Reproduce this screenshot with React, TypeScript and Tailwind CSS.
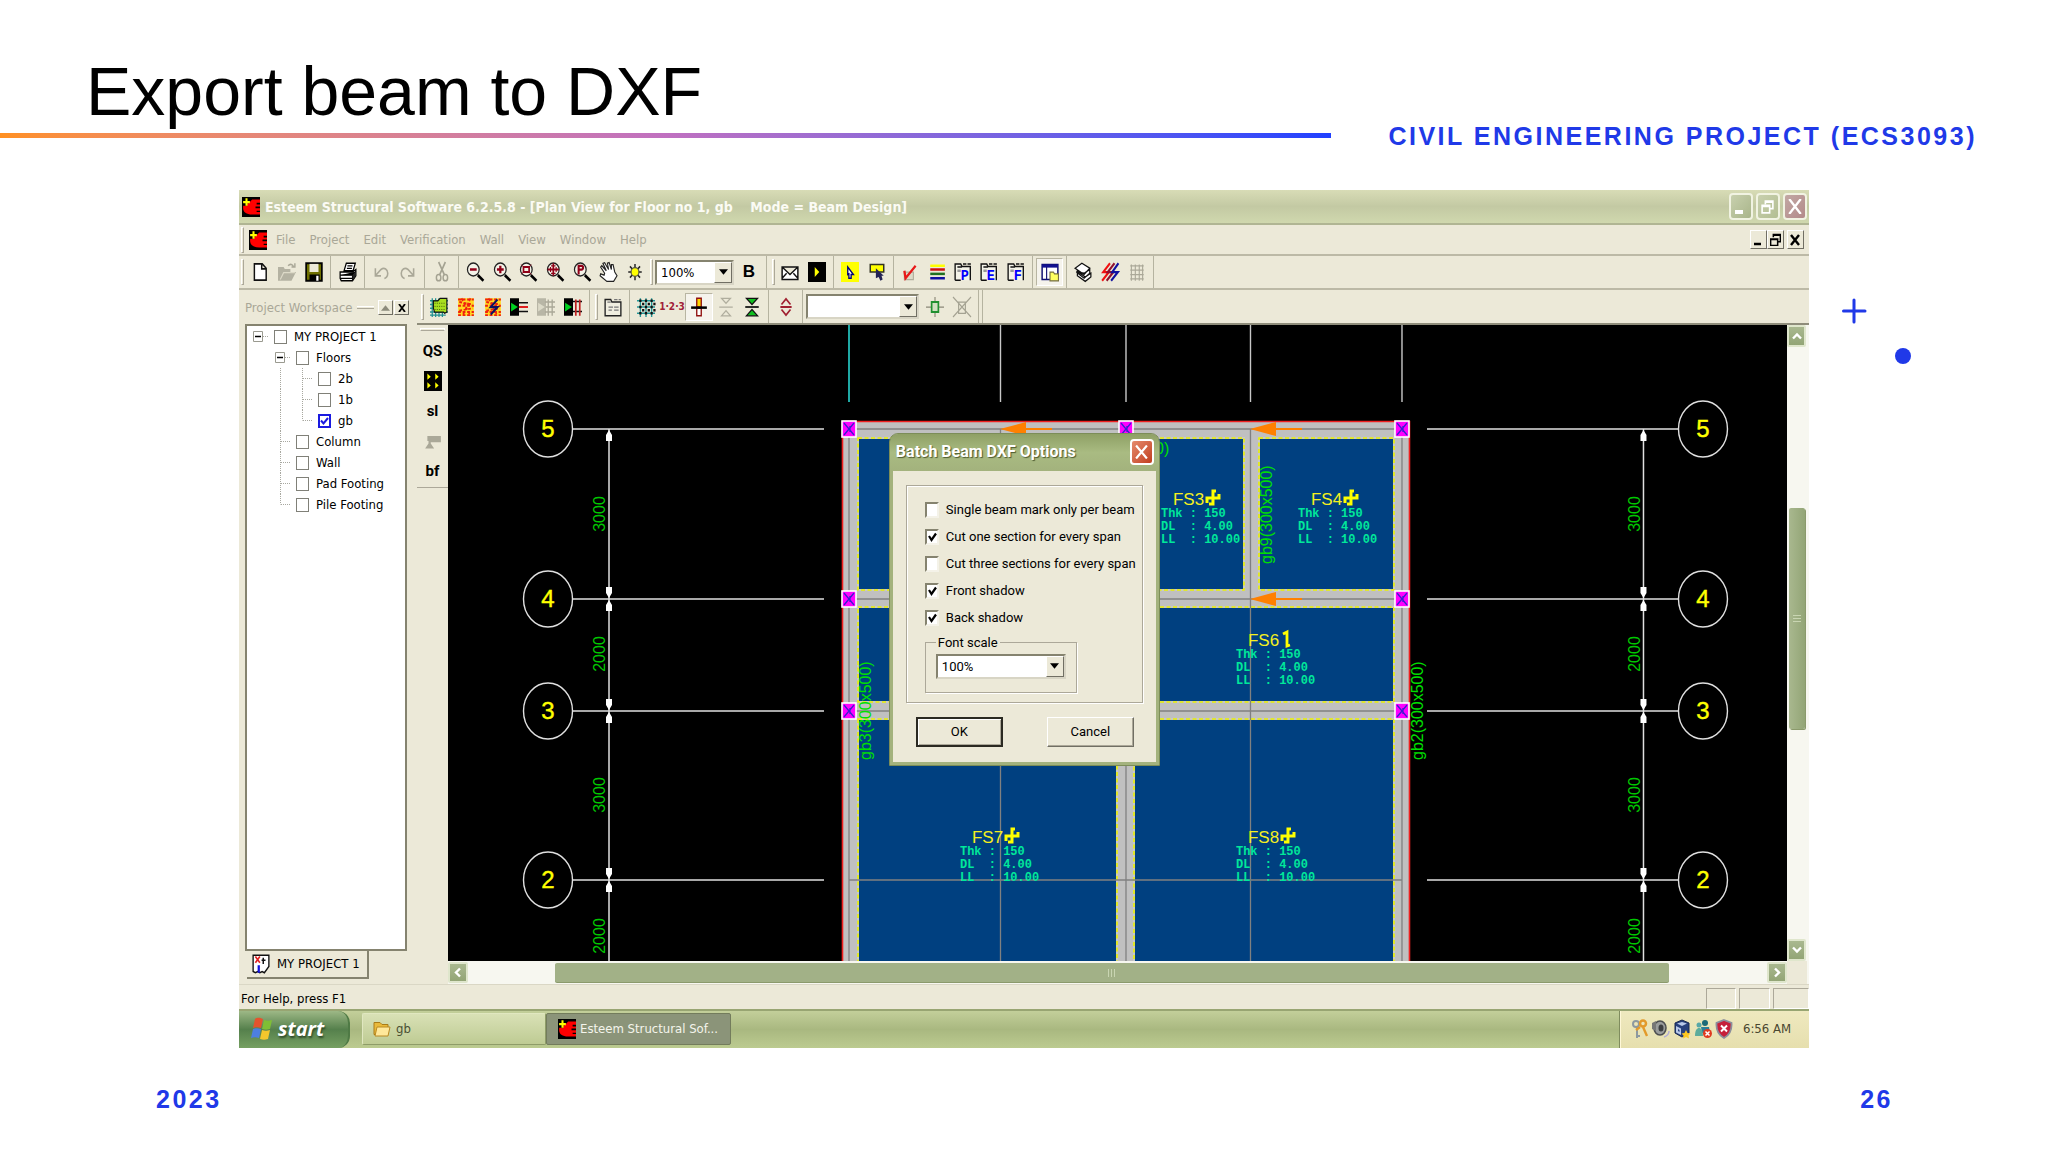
import type { ReactNode } from "react";

type Cell = "blank" | "box" | "line" | "tee" | "corner";

interface TreeRow {
  label: string;
  cells: Cell[];
  checked?: boolean;
}

interface Slab {
  name: string;
  x: number;
  y: number;
  infoX: number;
  infoY: number;
  oneWay?: boolean;
}

const menus = ["File", "Project", "Edit", "Verification", "Wall", "View", "Window", "Help"];

const treeRows: TreeRow[] = [
  { label: "MY PROJECT 1", cells: ["box"] },
  { label: "Floors", cells: ["blank", "box"] },
  { label: "2b", cells: ["blank", "line", "tee"] },
  { label: "1b", cells: ["blank", "line", "tee"] },
  { label: "gb", cells: ["blank", "line", "corner"], checked: true },
  { label: "Column", cells: ["blank", "tee"] },
  { label: "Wall", cells: ["blank", "tee"] },
  { label: "Pad Footing", cells: ["blank", "tee"] },
  { label: "Pile Footing", cells: ["blank", "corner"] },
];

const dialogOptions = [
  { label: "Single beam mark only per beam", checked: false },
  { label: "Cut one section for every span", checked: true },
  { label: "Cut three sections for every span", checked: false },
  { label: "Front shadow", checked: true },
  { label: "Back shadow", checked: true },
];

const gridRows = [
  { label: "5", y: 429 },
  { label: "4", y: 599 },
  { label: "3", y: 711 },
  { label: "2", y: 880 },
];

const spans = [
  { text: "3000", y: 514 },
  { text: "2000", y: 654 },
  { text: "3000", y: 795 },
  { text: "2000", y: 936 },
];

const slabs: Slab[] = [
  { name: "FS3", x: 1173, y: 505, infoX: 1161, infoY: 517 },
  { name: "FS4", x: 1311, y: 505, infoX: 1298, infoY: 517 },
  { name: "FS6", x: 1248, y: 646, infoX: 1236, infoY: 658, oneWay: true },
  { name: "FS7", x: 972, y: 843, infoX: 960, infoY: 855 },
  { name: "FS8", x: 1248, y: 843, infoX: 1236, infoY: 855 },
];

const panels = [
  { x: 858, y: 438, w: 259, h: 152 },
  { x: 1134, y: 438, w: 110, h: 152 },
  { x: 1259, y: 438, w: 135, h: 152 },
  { x: 858, y: 607, w: 259, h: 95 },
  { x: 1134, y: 607, w: 260, h: 95 },
  { x: 858, y: 719, w: 259, h: 250 },
  { x: 1134, y: 719, w: 260, h: 250 },
];

const columns = [
  [849, 429],
  [1126, 429],
  [1402, 429],
  [849, 599],
  [1402, 599],
  [849, 711],
  [1402, 711],
];

function Px({ children }: { children: ReactNode }) {
  return (
    <svg
      viewBox="0 0 16 16"
      preserveAspectRatio="none"
      className="h-[20px] w-[18px] shrink-0 overflow-visible"
      aria-hidden="true"
    >
      {children}
    </svg>
  );
}

function AppLogo() {
  return (
    <Px>
      <path fill="#000" d="M0 0h16v16H0z" />
      <path fill="#f00" d="M9 2h7v2.500h-3V6h3v1.500h-4V9h4v2h-3v1h3v2H9c-5 0-8-2-8-5V7h3.500V5H6z" />
      <path stroke="#ff0" strokeWidth="1.800" d="M4 1v6M1 4h6" />
    </Px>
  );
}

function Magnifier({ children }: { children: ReactNode }) {
  return (
    <Px>
      <circle cx="6.5" cy="6" r="5.2" fill="#f4f3e8" stroke="#222" strokeWidth="1.1" />
      <path stroke="#000" strokeWidth="2.2" d="M10.5 10.5 15.5 15" />
      <g stroke="#900018" fill="none" strokeWidth="1.5">
        {children}
      </g>
    </Px>
  );
}

function Sheet({ letter }: { letter: string }) {
  return (
    <Px>
      <path fill="#f4f3e8" stroke="#111" strokeWidth="1.2" d="M1 14.5V1.5h5l1 2h7.5v11" />
      <path stroke="#111" strokeWidth="1.2" d="M3 4h4M8 1.5h3M12 1.5h3M1 14.5h5" />
      <path stroke="#999" strokeWidth="2" d="M3 7h3" />
      <text x="6" y="14.500" fontSize="12" className="fill-[#0000ff] font-['Liberation_Mono',monospace] font-bold">
        {letter}
      </text>
    </Px>
  );
}

function Tool({ label, pressed, children }: { label: string; pressed?: boolean; children: ReactNode }) {
  return (
    <button
      type="button"
      aria-label={label}
      className={
        pressed
          ? "flex h-[28px] min-w-0 flex-1 items-center justify-center border border-[#b8b5a2] border-r-white border-b-white bg-[#f5f3ec]"
          : "flex h-[28px] min-w-0 flex-1 items-center justify-center"
      }
    >
      {children}
    </button>
  );
}

function Sep() {
  return <span className="mx-[3px] h-full w-px shrink-0 bg-[#b5b3a0]" />;
}

function Grip() {
  return <span className="mx-[2px] h-[26px] w-[3px] shrink-0 border border-white border-r-[#aca899] border-b-[#aca899]" />;
}

function Combo({ label, value, className }: { label: string; value: string; className: string }) {
  return (
    <span className={`relative block h-[25px] shrink-0 ${className}`}>
      <select
        aria-label={label}
        defaultValue={value}
        className="h-full w-full appearance-none border-2 border-[#85836f] border-r-[#d8d5c5] border-b-[#d8d5c5] bg-white px-1 leading-none text-black"
      >
        <option value={value}>{value}</option>
      </select>
      <span className="pointer-events-none absolute top-[2px] right-[2px] bottom-[2px] flex w-[18px] items-center justify-center border border-white border-r-[#716f64] border-b-[#716f64] bg-[#ece9d8]">
        <svg viewBox="0 0 8 5" className="h-[6px] w-[9px]" aria-hidden="true">
          <path d="M0 0h8L4 5z" />
        </svg>
      </span>
    </span>
  );
}

function TreeCell({ kind }: { kind: Cell }) {
  return (
    <svg viewBox="0 0 22 21" className="h-[21px] w-[22px] shrink-0" aria-hidden="true">
      <g stroke="#a8a8a0" strokeDasharray="1 1" fill="none">
        {kind === "box" && <path d="M16 10.5h6" />}
        {(kind === "line" || kind === "tee") && <path d="M11.5 0v21" />}
        {kind === "corner" && <path d="M11.5 0v10.5" />}
        {(kind === "tee" || kind === "corner") && <path d="M12 10.5h10" />}
      </g>
      {kind === "box" && (
        <>
          <path fill="#fff" stroke="#9a9a90" d="M6.5 5.5h9v10h-9z" />
          <path stroke="#000" strokeWidth="1.5" d="M8 10.5h6" />
        </>
      )}
    </svg>
  );
}

function TreeItem({ row }: { row: TreeRow }) {
  return (
    <li className="flex h-[21px] items-center">
      {row.cells.map((cell, i) => (
        <TreeCell key={i} kind={cell} />
      ))}
      <label className="ml-[5px] flex items-center gap-[7px] whitespace-nowrap">
        <span className="relative block h-[14px] w-[13px]">
          <input
            type="checkbox"
            defaultChecked={row.checked}
            className="peer block h-[14px] w-[13px] appearance-none border border-[#808078] bg-white checked:border-2 checked:border-[#1a1ae0]"
          />
          <svg
            viewBox="0 0 13 14"
            className="pointer-events-none absolute inset-0 hidden h-[14px] w-[13px] peer-checked:block"
            aria-hidden="true"
          >
            <path d="M3 6.5l2.5 3L10 4" fill="none" stroke="#1a1ae0" strokeWidth="2" />
          </svg>
        </span>
        {row.label}
      </label>
    </li>
  );
}

function ScrollButton({ label, d, className }: { label: string; d: string; className: string }) {
  return (
    <button
      type="button"
      aria-label={label}
      className={`flex shrink-0 items-center justify-center rounded-xs border-2 border-[#dfe6cc] bg-linear-to-b from-[#a9b88f] to-[#93a576] ${className}`}
    >
      <svg viewBox="0 0 10 10" className="h-[11px] w-[10px]" aria-hidden="true">
        <path d={d} fill="none" stroke="#fff" strokeWidth="2.4" />
      </svg>
    </button>
  );
}

function PlanView() {
  return (
    <svg viewBox="448 325 1339 636" className="block w-full bg-black" role="img" aria-label="Plan view for floor gb">
      <path stroke="#1fa8a4" strokeWidth="2" d="M849 325v77" />
      <path stroke="#c8c8c8" strokeWidth="1.4" d="M1000.5 325v77M1126 325v77M1250.5 325v77M1402 325v77" />

      {/* beams and slabs */}
      <path fill="#c0c0c0" d="M843 422h566v540H843z" />
      {panels.map((p) => (
        <g key={`${p.x}-${p.y}`}>
          <rect x={p.x} y={p.y} width={p.w} height={p.h} fill="#004080" />
          <rect x={p.x} y={p.y} width={p.w} height={p.h} fill="none" stroke="#c8c8c8" strokeWidth="2" />
          <rect x={p.x} y={p.y} width={p.w} height={p.h} fill="none" stroke="#e8f000" strokeWidth="1.6" strokeDasharray="4 2.5" />
        </g>
      ))}
      <path
        fill="none"
        stroke="#808080"
        strokeWidth="1.3"
        d="M849 429v540M1126 429v540M1402 429v540M1250.5 429v540M1000.5 429v540M849 429h553M849 599h553M849 711h553M849 880h553"
      />
      <path fill="none" stroke="#f02020" strokeWidth="1.6" d="M842.5 962V421.5h567V962" />

      {columns.map(([x, y]) => (
        <g key={`${x}-${y}`}>
          <rect x={x - 7} y={y - 8} width="14" height="16" fill="#f0f" stroke="#fff" strokeWidth="1.6" />
          <path d={`M${x - 5} ${y - 6}l10 12M${x + 5} ${y - 6}l-10 12M${x + 1} ${y - 3}v6`} stroke="#3a1fd0" strokeWidth="1.3" />
        </g>
      ))}

      {[
        [1000, 429],
        [1250, 429],
        [1250, 599],
      ].map(([x, y]) => (
        <path key={`${x}-${y}`} fill="#ff8000" d={`M${x} ${y}l26 -7v6h26v2h-26v6z`} />
      ))}

      {/* grid bubbles and dimension strings */}
      <path stroke="#e0e0e0" strokeWidth="1.5" d="M609 429V961M1643.5 429V961" />
      {gridRows.map((row, i) => (
        <g key={row.label}>
          <path stroke="#e0e0e0" strokeWidth="1.6" d={`M572 ${row.y}h252M1427 ${row.y}h252`} />
          {[548, 1703].map((x) => (
            <g key={x}>
              <ellipse cx={x} cy={row.y} rx="24.5" ry="28" fill="#000" stroke="#e0e0e0" strokeWidth="1.4" />
              <text
                x={x}
                y={row.y + 8}
                textAnchor="middle"
                fontSize="24"
                stroke="#ffff00"
                strokeWidth="0.4"
                className="fill-[#ffff00] font-['Liberation_Sans',sans-serif]"
              >
                {row.label}
              </text>
            </g>
          ))}
          {[609, 1643.5].map((x) => (
            <g key={x} fill="#fff">
              <path d={`M${x} ${row.y + 1}l3 5v6h-6v-6z`} />
              {i > 0 && <path d={`M${x} ${row.y - 1}l3 -5v-6h-6v6z`} />}
            </g>
          ))}
        </g>
      ))}
      <g fontSize="16" className="fill-[#00c800] font-['Liberation_Sans',sans-serif]">
        {spans.map((s) =>
          [605, 1640].map((x) => (
            <text key={`${x}-${s.y}`} textAnchor="middle" transform={`translate(${x} ${s.y}) rotate(-90)`}>
              {s.text}
            </text>
          ))
        )}
        <g className="fill-[#00e000]">
          <text transform="translate(1272 564) rotate(-90)">gb9(300x500)</text>
          <text transform="translate(871 760) rotate(-90)">gb3(300x500)</text>
          <text transform="translate(1423 760) rotate(-90)">gb2(300x500)</text>
          <text x="1155" y="454">
            0)
          </text>
        </g>
      </g>

      {slabs.map((s) => (
        <g key={s.name}>
          <text x={s.x} y={s.y} fontSize="17" className="fill-[#f4f020] font-['Liberation_Sans',sans-serif]">
            {s.name}
          </text>
          {s.oneWay ? (
            <path d={`M${s.x + 35} ${s.y - 12}l4 -2v14l3 -1`} fill="none" stroke="#ff0" strokeWidth="2.8" />
          ) : (
            <path
              d={`M${s.x + 34} ${s.y - 2}v-5h12v-4M${s.x + 43} ${s.y - 14}h-3v13h-4`}
              fill="none"
              stroke="#ff0"
              strokeWidth="3"
            />
          )}
          <g fontSize="12" className="fill-[#00e89a] font-['Liberation_Mono',monospace] font-bold">
            {["Thk : 150", "DL  : 4.00", "LL  : 10.00"].map((line, i) => (
              <text key={line} x={s.infoX} y={s.infoY + i * 13} className="whitespace-pre">
                {line}
              </text>
            ))}
          </g>
        </g>
      ))}
    </svg>
  );
}

function DxfDialog() {
  return (
    <div
      role="dialog"
      aria-label="Batch Beam DXF Options"
      className="absolute top-[16.5%] left-[33%] flex w-[269px] flex-col rounded-t-lg border-[3px] border-t-0 border-[#a3b27d] bg-[#ece9d8] font-['Roboto','Liberation_Sans',sans-serif] text-[13px] leading-[20px] text-black outline outline-[#7c8d58]"
    >
      <div className="-mx-[3px] flex h-[37px] items-center justify-between rounded-t-lg bg-linear-to-b from-[#8fa065] via-[#a9bb82] to-[#a3b27d] pr-[5px] pl-[6px]">
        <span className="text-[16px] font-bold text-white [text-shadow:1px_1px_1px_#4d5a30]">Batch Beam DXF Options</span>
        <button
          type="button"
          aria-label="Close"
          className="flex h-[26px] w-[24px] items-center justify-center rounded border-2 border-white bg-linear-to-br from-[#e58a6c] to-[#c03c1c]"
        >
          <svg viewBox="0 0 12 12" className="h-[14px] w-[13px]" aria-hidden="true">
            <path d="M1 0l10 12M11 0L1 12" stroke="#fff" strokeWidth="2" />
          </svg>
        </button>
      </div>
      <div className="mx-[13px] mt-[14px] border border-[#aca899] px-[18px] pt-[11px] pb-[9px] shadow-[1px_1px_0_#fff,inset_1px_1px_0_#fff]">
        {dialogOptions.map((option) => (
          <label key={option.label} className="flex h-[27px] items-center gap-[7px] whitespace-nowrap">
            <span className="relative block h-[16px] w-[14px]">
              <input
                type="checkbox"
                defaultChecked={option.checked}
                className="peer block h-[16px] w-[14px] appearance-none border-2 border-[#85836f] border-r-[#f4f2e8] border-b-[#f4f2e8] bg-white"
              />
              <svg
                viewBox="0 0 14 16"
                className="pointer-events-none absolute inset-0 hidden h-[16px] w-[14px] peer-checked:block"
                aria-hidden="true"
              >
                <path d="M4 7l2.5 4L11 4.5" fill="none" stroke="#000" strokeWidth="2.2" />
              </svg>
            </span>
            {option.label}
          </label>
        ))}
        <fieldset className="mt-px w-[152px] border border-[#aca899] px-[10px] pt-px pb-[13px] shadow-[1px_1px_0_#fff]">
          <legend className="px-[2px] leading-[20px]">Font scale</legend>
          <Combo label="Font scale" value="100%" className="w-full" />
        </fieldset>
      </div>
      <div className="flex justify-between pt-[14px] pr-[22px] pb-[15px] pl-[23px]">
        <button
          type="button"
          className="h-[30px] w-[87px] border-2 border-[#2b2a22] bg-[#ece9d8] shadow-[inset_1px_1px_0_#fff,inset_-1px_-1px_0_#aca899]"
        >
          OK
        </button>
        <button
          type="button"
          className="h-[30px] w-[87px] border border-white border-r-[#716f64] border-b-[#716f64] bg-[#ece9d8] shadow-[inset_-1px_-1px_0_#aca899]"
        >
          Cancel
        </button>
      </div>
    </div>
  );
}

function TitleBar() {
  return (
    <div className="flex h-[35px] items-center border-b-2 border-[#b0b593] bg-linear-to-b from-[#d8dcb6] via-[#c3c9a3] to-[#d0d8ae] pr-[2px] pl-[3px]">
      <AppLogo />
      <h2 className="ml-[5px] text-[14px] font-bold whitespace-pre text-[#fbfbf4]">
        Esteem Structural Software 6.2.5.8 - [Plan View for Floor no 1, gb    Mode = Beam Design]
      </h2>
      <div className="ml-auto flex gap-[3px]">
        <button
          type="button"
          aria-label="Minimize"
          className="flex h-[27px] w-[24px] items-end rounded border-2 border-[#f1f3e2] bg-linear-to-br from-[#c8d0ae] to-[#a9b58a] pb-[4px] pl-[4px]"
        >
          <span className="h-[4px] w-[8px] bg-white" />
        </button>
        <button
          type="button"
          aria-label="Restore"
          className="flex h-[27px] w-[24px] items-center justify-center rounded border-2 border-[#f1f3e2] bg-linear-to-br from-[#c8d0ae] to-[#b3be92]"
        >
          <svg viewBox="0 0 12 13" className="h-[14px] w-[13px]" aria-hidden="true">
            <path d="M4 4V1h7v7H8M1 5h7v7H1zM1 6h7M4 2h7" fill="none" stroke="#fff" strokeWidth="1.5" />
          </svg>
        </button>
        <button
          type="button"
          aria-label="Close"
          className="flex h-[27px] w-[24px] items-center justify-center rounded border-2 border-[#f1f3e2] bg-linear-to-br from-[#c2a8a4] to-[#b38a8a]"
        >
          <svg viewBox="0 0 12 13" className="h-[15px] w-[14px]" aria-hidden="true">
            <path d="M1 0l10 13M11 0L1 13" stroke="#fff" strokeWidth="2" />
          </svg>
        </button>
      </div>
    </div>
  );
}

function MenuBar() {
  const child =
    "flex h-[19px] w-[17px] items-center justify-center border border-white border-r-[#716f64] border-b-[#716f64] bg-[#ece9d8]";
  return (
    <div className="flex h-[31px] items-center border-b-2 border-[#bcb9a6] pr-[5px]">
      <Grip />
      <span className="ml-[3px]">
        <AppLogo />
      </span>
      <nav className="ml-[2px] flex text-[#a9a797]">
        {menus.map((menu) => (
          <button key={menu} type="button" className="px-[7px]">
            {menu}
          </button>
        ))}
      </nav>
      <div className="ml-auto flex">
        <button type="button" aria-label="Minimize child window" className={child}>
          <svg viewBox="0 0 10 12" className="h-[12px] w-[10px]" aria-hidden="true">
            <path d="M1 10h7" stroke="#000" strokeWidth="2.5" />
          </svg>
        </button>
        <button type="button" aria-label="Restore child window" className={child}>
          <svg viewBox="0 0 10 12" className="h-[13px] w-[11px]" aria-hidden="true">
            <path d="M3 4V1.5h6.5V8H7M.5 5.5H7v6H.5zM.5 6H7M3 2h6" fill="none" stroke="#000" strokeWidth="1.4" />
          </svg>
        </button>
        <button type="button" aria-label="Close child window" className={`ml-[3px] ${child}`}>
          <svg viewBox="0 0 10 12" className="h-[12px] w-[10px]" aria-hidden="true">
            <path d="M1 1l8 10M9 1L1 11" stroke="#000" strokeWidth="2.4" />
          </svg>
        </button>
      </div>
    </div>
  );
}

function MainToolbar() {
  return (
    <div className="flex h-[34px] items-center border-b-2 border-[#bcb9a6]">
      <Grip />
      <div className="flex w-[81px]">
        <Tool label="New">
          <Px>
            <path fill="#fff" stroke="#111" strokeWidth="1.3" d="M3 1.5h7l3.5 3.5v9.5H3zM9.5 1.5v4h4" />
          </Px>
        </Tool>
        <Tool label="Open">
          <Px>
            <path fill="#b4b2a2" d="M0 4h5l1 1.5h5V8h5l-4 7H0z" />
            <path fill="none" stroke="#aaa898" strokeWidth="1.3" d="M9 3c2-2 4-1 5 1m1-3v3h-3" />
            <path fill="none" stroke="#dddac8" d="M2 14l3-5.5h10" />
          </Px>
        </Tool>
        <Tool label="Save">
          <Px>
            <path fill="#6f7000" stroke="#000" strokeWidth="1.5" d="M1 1h14v14H1z" />
            <path fill="#ece9d8" d="M4 1.5h8V8H4z" />
            <path fill="#000" d="M4 10h9v5H4z" />
            <path fill="#fff" d="M10 11h2v4h-2z" />
          </Px>
        </Tool>
      </div>
      <Sep />
      <div className="flex w-[27px]">
        <Tool label="Print">
          <Px>
            <path fill="#fff" stroke="#000" strokeWidth="1.1" d="M4.5 7L6.500 1h8L12.500 7zM1 8h11l3-2v5l-3 4H2l-1-2z" />
            <path stroke="#000" strokeWidth="1" d="M7.500 3h4.500M7 5h4.500M1 10.500h11l3-3M1 13h11M12 10.500V15" />
            <path fill="#222" d="M12 10.500l3-3V11l-3 4z" />
          </Px>
        </Tool>
      </div>
      <Sep />
      <div className="flex w-[53px]">
        <Tool label="Undo">
          <Px>
            <path fill="none" stroke="#aaa898" strokeWidth="1.4" d="M3 5v6h5M3 11l5-5c3-2 6 0 6 3s-2 4-3 4" />
          </Px>
        </Tool>
        <Tool label="Redo">
          <Px>
            <path fill="none" stroke="#aaa898" strokeWidth="1.4" d="M13 5v6H8M13 11L8 6C5 4 2 6 2 9s2 4 3 4" />
          </Px>
        </Tool>
      </div>
      <Sep />
      <div className="flex w-[27px]">
        <Tool label="Cut">
          <Px>
            <path fill="none" stroke="#a4a292" strokeWidth="1.4" d="M5 0l5 10M11 0L6 10" />
            <ellipse cx="5" cy="12.5" rx="2" ry="2.5" fill="none" stroke="#a4a292" strokeWidth="1.3" />
            <ellipse cx="11" cy="12.5" rx="2" ry="2.5" fill="none" stroke="#a4a292" strokeWidth="1.3" />
          </Px>
        </Tool>
      </div>
      <Sep />
      <div className="flex w-[186px]">
        <Tool label="Zoom out">
          <Magnifier>
            <path strokeWidth="2" d="M3.5 6h6" />
          </Magnifier>
        </Tool>
        <Tool label="Zoom in">
          <Magnifier>
            <path strokeWidth="2" d="M3.5 6h6M6.5 3v6" />
          </Magnifier>
        </Tool>
        <Tool label="Zoom window">
          <Magnifier>
            <path d="M4 4h5v4H4z" />
            <path strokeWidth=".6" d="M2 2l2 2M11 2L9 4M2 10l2-2M11 10L9 8" />
          </Magnifier>
        </Tool>
        <Tool label="Zoom extents">
          <Magnifier>
            <path d="M6.5 1v10M1.5 6h10" />
            <path strokeWidth="1" d="M4 4v4M9 4v4M4.5 3h4M4.5 9h4" />
          </Magnifier>
        </Tool>
        <Tool label="Zoom previous">
          <Magnifier>
            <path strokeWidth="1.8" d="M5 10V3h2.5c2 0 2 3 0 3H5" />
          </Magnifier>
        </Tool>
        <Tool label="Pan">
          <Px>
            <path
              fill="#fff"
              stroke="#222"
              strokeWidth="1"
              d="M5 9L1.500 4l1-1 4 4-3-6 1.500-.5L8.500 6 7.500 1 9 .5l2 5.500 0-4h1.500L14 8l2 3-3 4.500H7L1 11l.5-1.500 3 1z"
            />
          </Px>
        </Tool>
        <Tool label="Redraw">
          <Px>
            <path stroke="#222" strokeWidth="1.3" d="M8 1.5v13M2 8h12M3.5 3.5l9 9M12.5 3.5l-9 9" />
            <circle cx="8" cy="8" r="3.5" fill="#ff0" stroke="#554" />
          </Px>
        </Tool>
      </div>
      <Grip />
      <Combo label="Zoom" value="100%" className="w-[79px]" />
      <div className="ml-px flex w-[28px]">
        <Tool label="Bold">
          <b className="font-['Liberation_Sans',sans-serif] text-[17px]">B</b>
        </Tool>
      </div>
      <Sep />
      <Grip />
      <div className="flex w-[53px]">
        <Tool label="Mail">
          <Px>
            <path fill="#fff" stroke="#111" strokeWidth="1.3" d="M1 4h14v10H1zM1 4l7 6 7-6M1 13l4-4M15 13l-4-4" />
          </Px>
        </Tool>
        <Tool label="Run">
          <Px>
            <path fill="#000" d="M0 0h16v16H0z" />
            <path fill="#ff0" d="M6 4l4 4-4 4z" />
          </Px>
        </Tool>
      </div>
      <Sep />
      <div className="flex w-[53px]">
        <Tool label="Select">
          <Px>
            <path fill="#ff0" d="M0 0h16v16H0z" />
            <path fill="#fff" stroke="#007" strokeWidth="1.2" d="M6 4l5 6H9v3H7V9.5L6 10z" />
          </Px>
        </Tool>
        <Tool label="Select beam">
          <Px>
            <path fill="#ff0" stroke="#332" strokeWidth="1.3" d="M2 2h12v6H2z" />
            <path fill="#225" d="M7 5l7 6h-2l1 3-2 1-1.5-3L7 13z" />
          </Px>
        </Tool>
      </div>
      <Sep />
      <div className="flex w-[132px]">
        <Tool label="Check">
          <Px>
            <path fill="#dddac8" stroke="#b0ad9b" d="M3 8h8v6H3z" />
            <path fill="none" stroke="#e81818" strokeWidth="2" d="M3 7l1 6L13 3" />
          </Px>
        </Tool>
        <Tool label="Layers">
          <Px>
            <path stroke="#ff0" strokeWidth="2" d="M2 3h13" />
            <path stroke="#d01010" strokeWidth="2" d="M2 6h13" />
            <path stroke="#207020" strokeWidth="2" d="M2 9.5h13" />
            <path stroke="#1010a0" strokeWidth="2" d="M2 13h13" />
          </Px>
        </Tool>
        <Tool label="Plan">
          <Sheet letter="P" />
        </Tool>
        <Tool label="Elevation">
          <Sheet letter="E" />
        </Tool>
        <Tool label="Frame">
          <Sheet letter="F" />
        </Tool>
      </div>
      <Sep />
      <div className="flex w-[27px]">
        <Tool label="Workspace" pressed>
          <Px>
            <path fill="#fff" stroke="#101070" strokeWidth="1.3" d="M1 2h14v12H1z" />
            <path fill="#101090" d="M1 2h14v2.5H1z" />
            <path stroke="#101070" d="M5 4v10" />
            <path fill="#ffff60" stroke="#777040" d="M8 8h3l1 1.5h3.5v5.5H8z" />
          </Px>
        </Tool>
      </div>
      <Sep />
      <div className="flex w-[80px]">
        <Tool label="Stack">
          <Px>
            <path fill="#fff" stroke="#111" strokeWidth="1.1" d="M3 11l7 4.500 5-3.500V9l-5 3-7-4.500zM2 8l7 5 5-4V6l-5 3zM1 5l6-4 7 4-5 5z" />
          </Px>
        </Tool>
        <Tool label="Analyse">
          <Px>
            <path fill="none" stroke="#f01010" strokeWidth="1.8" d="M8 1L2 8h5l-6 7" />
            <path fill="none" stroke="#901030" strokeWidth="1.8" d="M12 1L6 8h5l-6 7" />
            <path fill="none" stroke="#1010a0" strokeWidth="1.8" d="M15.5 1L10 8h5l-6 7" />
          </Px>
        </Tool>
        <Tool label="Grid">
          <Px>
            <path fill="none" stroke="#aaa898" d="M3 2v13M6.5 2v13M10 2v13M13 2v13M2 3h12M2 6.5h12M2 10h12M2 13.5h12" />
          </Px>
        </Tool>
      </div>
      <Sep />
    </div>
  );
}

function DesignToolbar() {
  return (
    <div className="flex h-[35px] items-center border-b-2 border-[#8f8d7b] pl-[2px]">
      <Grip />
      <div className="flex w-[160px]">
        <Tool label="Slab mesh">
          <Px>
            <path stroke="#209090" strokeWidth="1.1" d="M2 1v15M5 1v15M8 1v15M11 1v15M0 3h16M0 6h16M0 9h16M0 12h16M0 14.5h14" />
            <path fill="#a8e020" stroke="#111" d="M3 3h4l2-2h6v11l-2 1-1-1H4l-1-3z" />
            <path stroke="#507010" strokeWidth=".8" strokeDasharray="1 1" d="M4 5h10M4 7.5h10M4 10h10" />
          </Px>
        </Tool>
        <Tool label="Contour">
          <Px>
            <path fill="#ffd820" d="M1 1h14v14H1z" />
            <path
              fill="none"
              stroke="#f02010"
              strokeWidth="1.5"
              strokeDasharray="2.5 1.5"
              d="M1 2h14M2 4l12 2M1 7h14M2 11l12-2M1 12h14M1 14.5h14M4 1l8 14M12 1L5 15"
            />
          </Px>
        </Tool>
        <Tool label="Stress">
          <Px>
            <path fill="#ffd820" d="M1 1h14v14H1z" />
            <path
              fill="none"
              stroke="#f02010"
              strokeWidth="1.5"
              strokeDasharray="2.5 1.5"
              d="M1 2h14M2 4l12 2M1 7h14M2 11l12-2M1 12h14M1 14.5h14M4 1l8 14"
            />
            <path fill="none" stroke="#101060" strokeWidth="1.8" d="M12 2L6 8h6l-6 6" />
          </Px>
        </Tool>
        <Tool label="Beam run">
          <Px>
            <path fill="#000" d="M0 1h8v14H0z" />
            <path fill="#00d020" d="M1 4.5L7 8l-6 3.5z" />
            <path stroke="#111" strokeWidth="1.2" d="M8 4.5h8M8 11.5h8" />
            <path stroke="#e02020" strokeWidth="1.6" d="M8 8h8" />
          </Px>
        </Tool>
        <Tool label="Column run">
          <Px>
            <path fill="#b8b6a6" d="M0 1h8v14H0z" />
            <path fill="#dcdac8" d="M1 4.5L7 8l-6 3.5z" />
            <path stroke="#aaa898" strokeWidth="1.2" d="M7 4h9M8 8h8M7 12h9M10 2v13M13.5 2v13" />
          </Px>
        </Tool>
        <Tool label="Frame run">
          <Px>
            <path fill="#000" d="M0 1h8v14H0z" />
            <path fill="#00d020" d="M1 4.5L7 8l-6 3.5z" />
            <path stroke="#111" strokeWidth="1.2" d="M8 3.5h8M8 11.5h8" />
            <path stroke="#c02020" strokeWidth="1.5" d="M10.5 2v13M14 2v13" />
          </Px>
        </Tool>
      </div>
      <Sep />
      <Grip />
      <div className="flex w-[26px]">
        <Tool label="Report">
          <Px>
            <path fill="#f0eee0" stroke="#222" strokeWidth="1.2" d="M1 15V2h5l1 2h8v11z" />
            <path stroke="#777" d="M3 4h3M9 2h3M13 2h2M4 8h4M9 8h4M9 10.5h4M4 10.5h3" />
          </Px>
        </Tool>
      </div>
      <Sep />
      <div className="flex w-[132px]">
        <Tool label="Grid points">
          <Px>
            <path fill="none" stroke="#209898" strokeWidth="1.2" d="M3 1v15M8 1v15M13 1v15M0 3h16M0 8h16M0 13h16" />
            <path stroke="#111" strokeWidth="2" strokeDasharray="2 3" d="M2 3h14M2 8h14M2 13h14M4.5 5.5h12M4.5 10.5h12" />
          </Px>
        </Tool>
        <Tool label="Numbering">
          <span className="text-[10px] leading-none font-bold text-[#a02038]">1·2·3</span>
        </Tool>
        <Tool label="Section" pressed>
          <Px>
            <path fill="#ffd800" stroke="#901010" strokeWidth="1.2" d="M6 1h4v7H6z" />
            <path fill="#fff" stroke="#901010" strokeWidth="1.2" d="M6 9h4v6H6z" />
            <path stroke="#000" strokeWidth="2" d="M1 8.5h14" />
          </Px>
        </Tool>
        <Tool label="Collapse">
          <Px>
            <path fill="none" stroke="#b0ae9e" d="M4 1h8L8 5zM2 8h12M4 15h8l-4-4z" />
          </Px>
        </Tool>
        <Tool label="Expand">
          <Px>
            <path fill="#10c020" stroke="#111" d="M3 1h10L8 6zM3 15h10l-5-5z" />
            <path stroke="#111" strokeWidth="1.4" d="M2 8h12" />
          </Px>
        </Tool>
      </div>
      <Sep />
      <div className="flex w-[27px]">
        <Tool label="Split">
          <Px>
            <path fill="none" stroke="#a02030" strokeWidth="1.5" d="M3 8h10M4 6l4-4.5L12 6M4 10l4 4.5 4-4.5" />
          </Px>
        </Tool>
      </div>
      <Sep />
      <Combo label="Beam" value="" className="w-[113px]" />
      <div className="ml-[3px] flex w-[53px]">
        <Tool label="Locate">
          <Px>
            <path stroke="#8a8878" d="M8 0v16M0 8h16" />
            <path fill="#cfe0c0" stroke="#209030" strokeWidth="1.5" d="M5 4h6v8H5z" />
          </Px>
        </Tool>
        <Tool label="Clear">
          <Px>
            <path fill="none" stroke="#a4a292" d="M0 0l16 16M16 0L0 16M5 4h6v9H5z" />
          </Px>
        </Tool>
      </div>
      <Sep />
      <span className="h-full w-px bg-[#b5b3a0]" />
    </div>
  );
}

function Workspace() {
  return (
    <aside className="flex w-[178px] shrink-0 flex-col pt-px pl-[6px]">
      <div className="flex h-[33px] items-center pr-[8px] text-[#a9a797]">
        <span className="whitespace-nowrap">Project Workspace</span>
        <span className="mx-[4px] h-[3px] flex-1 border-t border-b border-t-white border-b-[#aca899]" />
        <button
          type="button"
          aria-label="Roll up"
          className="flex h-[15px] w-[15px] items-center justify-center border border-white border-r-[#716f64] border-b-[#716f64]"
        >
          <svg viewBox="0 0 8 5" className="h-[6px] w-[9px]" aria-hidden="true">
            <path d="M0 5h8L4 0z" fill="#8d8b7c" />
          </svg>
        </button>
        <button
          type="button"
          aria-label="Close workspace"
          className="ml-px flex h-[15px] w-[15px] items-center justify-center border border-white border-r-[#716f64] border-b-[#716f64]"
        >
          <svg viewBox="0 0 8 8" className="h-[8px] w-[8px]" aria-hidden="true">
            <path d="M1 0l6 8M7 0L1 8" stroke="#000" strokeWidth="1.8" />
          </svg>
        </button>
      </div>
      <ul className="mr-[10px] flex-1 border-2 border-[#85836f] bg-white text-black">
        {treeRows.map((row) => (
          <TreeItem key={row.label} row={row} />
        ))}
      </ul>
      <button
        type="button"
        className="mb-[5px] ml-[2px] flex h-[28px] w-[122px] items-center gap-[7px] border-r-2 border-b-2 border-[#85836f] pl-[5px] text-black"
      >
        <Px>
          <path fill="#fff" stroke="#111" strokeWidth="1.2" d="M1 1h14v9l-4 5-2-1-2 1-2-1-2 1-2-1z" />
          <path stroke="#e02020" strokeWidth="1.5" d="M3 2l4 5M7 2L3 7" />
          <path stroke="#111" strokeWidth="1.3" d="M10 3v5M8.5 5H12" />
          <path stroke="#1010e0" strokeWidth="2" d="M6 9v6" />
        </Px>
        <span className="whitespace-nowrap">MY PROJECT 1</span>
      </button>
    </aside>
  );
}

function SideToolbar() {
  return (
    <div className="w-[31px] shrink-0 bg-[#ece9d8]">
      <div className="flex flex-col items-center border-b border-[#aca899] pb-px font-['Roboto','Liberation_Sans',sans-serif] text-[15px] font-bold">
        <span className="mt-[3px] mb-[5px] h-[3px] w-[25px] border border-white border-b-[#aca899]" />
        <button type="button" className="h-[30px] leading-[30px]">
          QS
        </button>
        <button type="button" aria-label="Run all" className="flex h-[30px] items-center">
          <Px>
            <path fill="#000" d="M0 0h16v16H0z" />
            <path fill="#ff0" d="M3 2l3 2.5L3 7zM10 2l3 2.5L10 7zM3 9l3 2.5L3 14zM10 9l3 2.5-3 2.5z" />
          </Px>
        </button>
        <button type="button" className="h-[30px] leading-[30px]">
          sl
        </button>
        <button type="button" aria-label="Footing" className="flex h-[30px] items-center">
          <Px>
            <path fill="#aaa898" d="M3 4h12v5H6v1l3 4H1l3-4V8H3z" />
          </Px>
        </button>
        <button type="button" className="h-[30px] leading-[30px]">
          bf
        </button>
      </div>
    </div>
  );
}

function Taskbar() {
  return (
    <div className="flex h-[39px] items-center border-t-2 border-[#98a572] bg-linear-to-b from-[#c3cf9a] via-[#a9b880] to-[#bccb90]">
      <button
        type="button"
        className="flex h-full w-[111px] items-center gap-[5px] rounded-r-xl border-r-2 border-[#4f7a45] bg-linear-to-b from-[#9db886] via-[#55804c] to-[#76a062] pl-[12px] font-['Open_Sans','DejaVu_Sans',sans-serif] text-[20px] font-bold text-white italic [text-shadow:1px_2px_2px_#2f4a28]"
      >
        <svg viewBox="0 0 22 24" className="h-[24px] w-[22px]" aria-hidden="true">
          <path fill="#e5532d" d="M4 2c3-2 5-1 8 0l-2 9c-3-1-5-1-8 0z" />
          <path fill="#7fbf35" d="M13 3c3 1 5 1 8 0l-2 9c-3 1-5 1-8 0z" />
          <path fill="#4d7fe0" d="M2 12c3-1 5-1 8 0l-2 9c-3-1-5-1-8 0z" />
          <path fill="#f3c62c" d="M11 13c3 1 5 1 8 0l-2 9c-3 1-5 1-8 0z" />
        </svg>
        start
      </button>
      <button
        type="button"
        className="ml-[12px] flex h-[32px] w-[184px] items-center gap-[5px] rounded-xs border border-[#e0e7c0] border-r-[#8e9c68] border-b-[#8e9c68] bg-linear-to-b from-[#d9e1b6] to-[#becb93] pl-[10px] text-[#4a4f33]"
      >
        <svg viewBox="0 0 18 18" className="h-[18px] w-[18px]" aria-hidden="true">
          <path fill="#e9b93a" stroke="#a97b18" d="M1 2.5h6l2 2h6v10H1z" />
          <path fill="#ffe89a" stroke="#b98a22" d="M4 7h13l-2 9H2z" />
        </svg>
        gb
      </button>
      <button
        type="button"
        className="flex h-[32px] w-[185px] items-center gap-[4px] rounded-xs border border-[#737c5c] bg-[#8b9479] pl-[11px] whitespace-nowrap text-[#f4f5ec]"
      >
        <AppLogo />
        Esteem Structural Sof...
      </button>
      <div className="ml-auto flex h-full w-[190px] items-center gap-[3px] border-l border-[#7f8c5e] bg-linear-to-b from-[#efe9bf] to-[#e6dfae] pl-[11px] text-[#4a4730] shadow-[inset_1px_0_0_#fff8d8]">
        <svg viewBox="0 0 18 20" className="h-[20px] w-[18px]" aria-hidden="true">
          <circle cx="5" cy="5" r="3" fill="none" stroke="#8d99a0" strokeWidth="2" />
          <path stroke="#8d99a0" strokeWidth="2" d="M6 8v11M6 17h3" />
          <circle cx="12" cy="4.5" r="3" fill="none" stroke="#e39a2a" strokeWidth="2.5" />
          <path stroke="#e39a2a" strokeWidth="2.4" d="M9 8l-4 3M12 8l4 9" />
        </svg>
        <svg viewBox="0 0 18 20" className="h-[20px] w-[18px]" aria-hidden="true">
          <ellipse cx="8" cy="9" rx="6" ry="7" fill="#9a9c9c" stroke="#4c4e50" strokeWidth="1.5" />
          <ellipse cx="9" cy="9" rx="2.5" ry="3.5" fill="#3d3f42" />
          <path fill="#777" d="M0 4l4-2v10l-4-2z" />
          <path fill="none" stroke="#b3add6" strokeWidth="1.5" d="M12 18c3-1 5-3 5-6" />
        </svg>
        <svg viewBox="0 0 18 20" className="h-[20px] w-[18px]" aria-hidden="true">
          <path fill="#27407c" stroke="#182850" d="M2 4l7-3 7 3v10l-7 4-7-4z" />
          <path fill="#b8c8e8" d="M4 4.5L9 3l5 1.500L9 7zM3 7l5 2.500V16l-5-2.500z" />
          <path fill="#27407c" d="M5 10l1.500 1v2L5 12z" />
          <path fill="#ffc820" d="M13 11l1.500 3 3 .5-2 2 .5 3-3-1.500-3 1.500.5-3-2-2 3-.5z" />
        </svg>
        <svg viewBox="0 0 18 20" className="h-[20px] w-[18px]" aria-hidden="true">
          <circle cx="11" cy="4" r="3" fill="#1d6a78" />
          <circle cx="5" cy="6" r="2.5" fill="#58a8a8" />
          <path fill="#2c7f9a" d="M7 8h8l1 6H8z" />
          <path fill="#5dac9c" d="M1 17c0-6 2-8 4-8s4 2 4 8z" />
          <circle cx="13.5" cy="14.5" r="4.5" fill="#e03a20" />
          <path stroke="#fff" strokeWidth="1.5" d="M11.5 12.5l4 4M15.5 12.5l-4 4" />
        </svg>
        <svg viewBox="0 0 18 20" className="h-[20px] w-[18px]" aria-hidden="true">
          <path fill="#c61f3a" stroke="#8b8f9c" strokeWidth="1.8" d="M9 1l7.5 3c.5 7-2 12-7.5 15C3.5 16 1 11 1.5 4z" />
          <path stroke="#fff" strokeWidth="2" d="M6 6.5l6 6M12 6.5l-6 6" />
        </svg>
        <span className="ml-[7px] whitespace-nowrap">6:56 AM</span>
      </div>
    </div>
  );
}

export default function App() {
  return (
    <div className="min-h-screen overflow-hidden bg-white pt-[57px] font-['Liberation_Sans',sans-serif]">
      <header className="flex items-end justify-between">
        <div className="w-[65%] pb-[10px]">
          <h1 className="pb-2 pl-[86px] text-[68px] leading-[68px] text-black">Export beam to DXF</h1>
          <div className="h-[5px] bg-linear-to-r from-[#ff9020] via-[#c070c0] to-[#2040ff]" />
        </div>
        <p className="pr-[71px] text-[25px] leading-[24px] font-bold tracking-widest whitespace-nowrap text-[#2039e8]">
          CIVIL ENGINEERING PROJECT (ECS3093)
        </p>
      </header>

      <div className="mt-[42px] flex">
        <section className="ml-[11.67%] flex w-[76.66%] flex-col bg-[#ece9d8] font-['DejaVu_Sans_Condensed','Open_Sans',sans-serif] text-[13px] leading-[18px]">
          <TitleBar />
          <MenuBar />
          <MainToolbar />
          <div className="flex">
            <Workspace />
            <div className="min-w-0 flex-1">
              <DesignToolbar />
              <div className="flex">
                <SideToolbar />
                <div className="relative min-w-0 flex-1">
                  <PlanView />
                  <div className="flex h-[23px] items-center bg-[#f7f7f0] pt-px">
                    <ScrollButton label="Scroll left" d="M7 1L3 5l4 4" className="h-[21px] w-[20px]" />
                    <div className="h-full w-[6.5%]" />
                    <div className="flex h-[19px] w-[83.2%] items-center justify-center rounded-xs bg-[#a2b187] shadow-[0_1px_0_#8b9a6c]">
                      <svg viewBox="0 0 10 8" className="h-[8px] w-[10px]" aria-hidden="true">
                        <path d="M1.5 0v8M4.5 0v8M7.5 0v8" stroke="#c9d5b2" />
                      </svg>
                    </div>
                    <ScrollButton label="Scroll right" d="M3 1l4 4-4 4" className="ml-auto h-[21px] w-[20px]" />
                  </div>
                  <DxfDialog />
                </div>
                <div className="flex w-[22px] shrink-0 flex-col items-center bg-[#f7f7f0] pr-[2px]">
                  <ScrollButton label="Scroll up" d="M1 7l4-4 4 4" className="h-[22px] w-[19px]" />
                  <div className="h-[24.5%]" />
                  <div className="flex h-[33.5%] w-[16px] items-center justify-center rounded-xs bg-linear-to-r from-[#a9b88f] to-[#93a576] shadow-[1px_1px_0_#8b9a6c]">
                    <svg viewBox="0 0 8 10" className="h-[10px] w-[8px]" aria-hidden="true">
                      <path d="M0 1.5h8M0 4.5h8M0 7.5h8" stroke="#c9d5b2" />
                    </svg>
                  </div>
                  <ScrollButton label="Scroll down" d="M1 3l4 4 4-4" className="mt-auto h-[22px] w-[19px]" />
                  <div className="h-[23px] w-full shrink-0 bg-[#ece9d8]" />
                </div>
              </div>
            </div>
          </div>
          <footer className="flex h-[25px] items-end justify-between border-t border-[#dad7c5] pl-[2px]">
            <span className="pb-px">For Help, press F1</span>
            <div className="flex h-[21px] gap-[3px]">
              <span className="w-[30px] border border-[#aca899] border-r-white border-b-white" />
              <span className="w-[31px] border border-[#aca899] border-r-white border-b-white" />
              <span className="w-[36px] border border-[#aca899] border-r-white border-b-white" />
            </div>
          </footer>
          <Taskbar />
        </section>
        <svg viewBox="0 0 239 300" className="h-full flex-1" aria-hidden="true">
          <path d="M45 110v22M34.500 121h21.500" stroke="#2039e8" strokeWidth="3" strokeLinecap="round" />
          <circle cx="94" cy="166" r="8" fill="#2039e8" />
        </svg>
      </div>

      <div className="mt-[39px] flex justify-between pr-[155px] pl-[156px] text-[25px] leading-[25px] font-bold tracking-widest text-[#2039e8]">
        <span>2023</span>
        <span>26</span>
      </div>
    </div>
  );
}
